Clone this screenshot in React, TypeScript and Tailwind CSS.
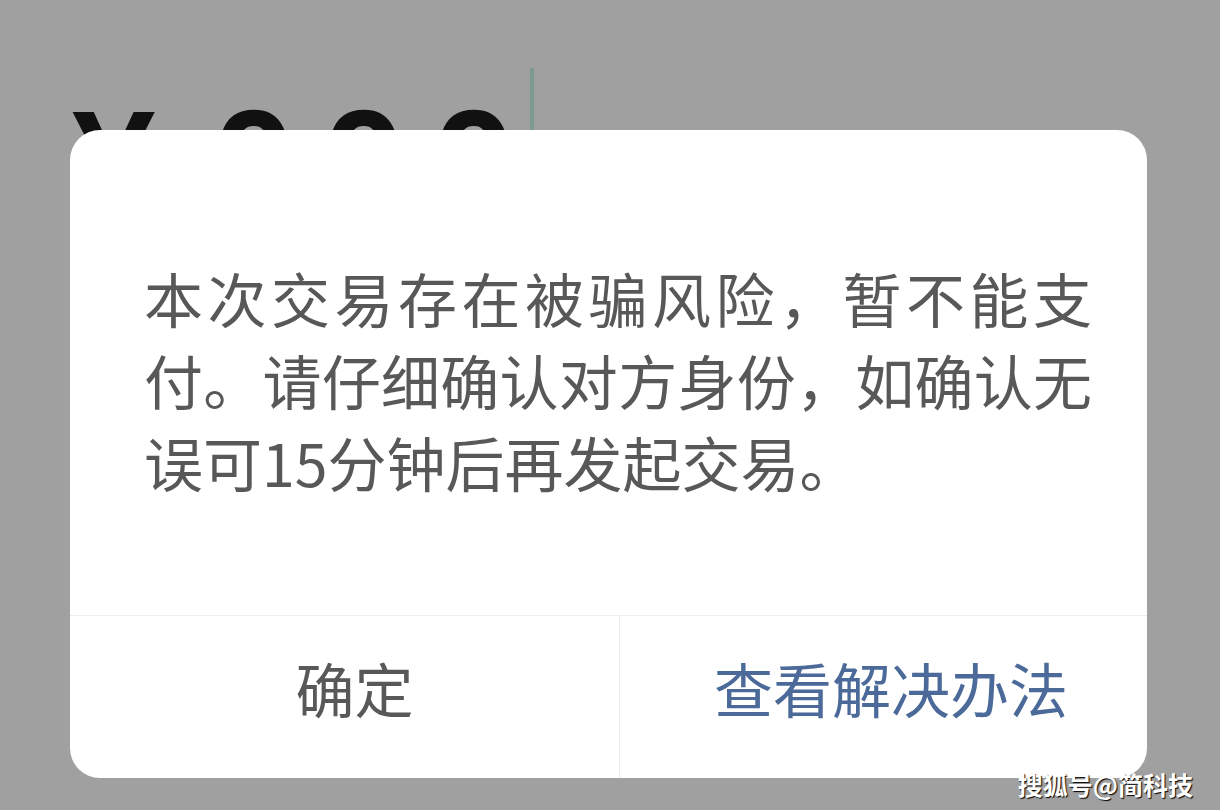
const cjk = "font-['Noto_Sans_CJK_SC','Noto_Sans',sans-serif]";

function AmountBehind() {
    // the payment screen that sits under the dialog: amount + cursor
    return (
        <div className="flex items-start pt-[68px] pl-[72px] text-[#111] font-['Liberation_Sans',Arial,sans-serif] font-bold">
            <span className="mt-[20px] w-[140px] text-[150px] leading-none">¥</span>
            <span className="mt-[20px] w-[110px] text-[150px] leading-none">0</span>
            <span className="mt-[20px] w-[110px] text-[150px] leading-none">0</span>
            <span className="mt-[20px] w-[96px] text-[150px] leading-none">0</span>
            <div className="ml-[2px] h-[90px] w-[4px] bg-[#7d9a8f]" />
        </div>
    );
}

function RiskDialog() {
    return (
        <div className={`flex h-[648px] w-[1077px] flex-col overflow-hidden rounded-[30px] bg-white ${cjk}`}>
            <div className="h-[485px] pl-[74px] pt-[127px]">
                <p className="w-[948px] text-justify text-[59px] leading-[82px] text-[#585858]">
                    本次交易存在被骗风险，暂不能支付。请仔细确认对方身份，如确认无误可15分钟后再发起交易。
                </p>
            </div>
            <div className="flex h-[163px] border-t border-[#ececec]">
                <button className="flex w-[550px] items-center justify-center border-r border-[#ececec] pb-[20px] pl-[20px] text-[59px] leading-none text-[#585858]">
                    确定
                </button>
                <button className="flex flex-1 items-center justify-center pb-[20px] pl-[15px] text-[59px] leading-none text-[#4b6a99]">
                    查看解决办法
                </button>
            </div>
        </div>
    );
}

export default function App() {
    return (
        <div className="relative h-[810px] w-[1220px] overflow-hidden bg-[#a0a0a0]">
            <AmountBehind />

            {/* modal layer */}
            <div className="absolute inset-0 pl-[70px] pt-[130px]">
                <RiskDialog />
            </div>

            {/* watermark */}
            <span
                className={`absolute bottom-[13px] right-[27px] text-[25px] font-bold leading-none text-white [text-shadow:1px_1px_1px_#000] ${cjk}`}
            >
                搜狐号@简科技
            </span>
        </div>
    );
}
